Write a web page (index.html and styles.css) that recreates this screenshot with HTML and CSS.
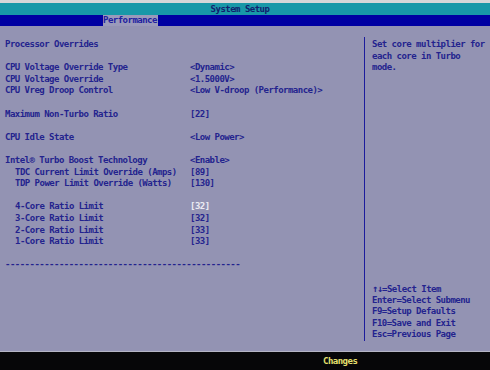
FILE: index.html
```
<!DOCTYPE html>
<html>
<head>
    <link rel="stylesheet" href="styles.css">
</head>
<body>
    <div class="screen">
        <div class="top-strip"></div>
        <div class="title-bar">System Setup</div>
        <div class="tab-bar">
            <span class="tab active">Performance</span>
        </div>
        <div class="main">
            <div class="settings">
                <div class="row heading">Processor Overrides</div>
                <div class="row blank"></div>
                <div class="row"><span class="label">CPU Voltage Override Type</span><span class="value">&lt;Dynamic&gt;</span></div>
                <div class="row"><span class="label">CPU Voltage Override</span><span class="value">&lt;1.5000V&gt;</span></div>
                <div class="row"><span class="label">CPU Vreg Droop Control</span><span class="value">&lt;Low V-droop (Performance)&gt;</span></div>
                <div class="row blank"></div>
                <div class="row"><span class="label">Maximum Non-Turbo Ratio</span><span class="value">[22]</span></div>
                <div class="row blank"></div>
                <div class="row"><span class="label">CPU Idle State</span><span class="value">&lt;Low Power&gt;</span></div>
                <div class="row blank"></div>
                <div class="row"><span class="label">Intel® Turbo Boost Technology</span><span class="value">&lt;Enable&gt;</span></div>
                <div class="row sub"><span class="label">TDC Current Limit Override (Amps)</span><span class="value">[89]</span></div>
                <div class="row sub"><span class="label">TDP Power Limit Override (Watts)</span><span class="value">[130]</span></div>
                <div class="row blank"></div>
                <div class="row sub"><span class="label">4-Core Ratio Limit</span><span class="value selected">[32]</span></div>
                <div class="row sub"><span class="label">3-Core Ratio Limit</span><span class="value">[32]</span></div>
                <div class="row sub"><span class="label">2-Core Ratio Limit</span><span class="value">[33]</span></div>
                <div class="row sub"><span class="label">1-Core Ratio Limit</span><span class="value">[33]</span></div>
                <div class="row blank"></div>
                <div class="row">------------------------------------------------</div>
            </div>
            <div class="help">
                <div class="help-text">
                    <div class="row">Set core multiplier for</div>
                    <div class="row">each core in Turbo</div>
                    <div class="row">mode.</div>
                </div>
                <div class="help-keys">
                    <div class="row"><span class="arrows">↑↓</span>=Select Item</div>
                    <div class="row">Enter=Select Submenu</div>
                    <div class="row">F9=Setup Defaults</div>
                    <div class="row">F10=Save and Exit</div>
                    <div class="row">Esc=Previous Page</div>
                </div>
            </div>
        </div>
        <div class="status-bar">
            <span class="status">Changes</span>
        </div>
    </div>
</body>
</html>
```

FILE: styles.css
```
body {
    margin: 0;
    padding: 0;
    font-family: "DejaVu Sans Mono", "Liberation Mono", monospace;
    font-size: 9px;
    letter-spacing: -0.52px;
    font-weight: bold;
    color: #23238e;
}

.screen {
    width: 490px;
    height: 370px;
    display: flex;
    flex-direction: column;
    background-color: #9393b3;
    overflow: hidden;
}

.top-strip {
    height: 3px;
    background-color: #d6d6d8;
}

.title-bar {
    height: 12px;
    line-height: 12px;
    background-color: #1898a8;
    color: #10206e;
    text-align: center;
    padding-right: 10px;
}

.tab-bar {
    height: 11px;
    line-height: 11px;
    background-color: #0000a2;
    padding-left: 103px;
}

.tab {
    display: inline-block;
    padding: 0 1px 0 0;
}

.tab.active {
    background-color: #9a9aba;
    color: #2020a0;
}

.main {
    flex: 1;
    display: flex;
    border-bottom: 1px solid #b4b4c4;
}

.settings {
    width: 359px;
    padding: 13px 0 0 5px;
    box-sizing: border-box;
}

.row {
    height: 11.6px;
    line-height: 11.6px;
    white-space: pre;
}

.label {
    display: inline-block;
    width: 185px;
}

.sub .label {
    width: 175px;
    padding-left: 10px;
}

.value.selected {
    color: #ececf4;
}

.help {
    margin: 11px 0 10px 5px;
    border-left: 1px solid #1c1c9c;
    padding: 2px 0 0 7px;
    flex: 1;
    display: flex;
    flex-direction: column;
    justify-content: space-between;
}

.arrows {
    font-size: 10px;
    letter-spacing: -1px;
}

.status-bar {
    height: 18px;
    line-height: 18px;
    background-color: #060608;
    padding-left: 323px;
}

.status {
    color: #e4e070;
}
```
